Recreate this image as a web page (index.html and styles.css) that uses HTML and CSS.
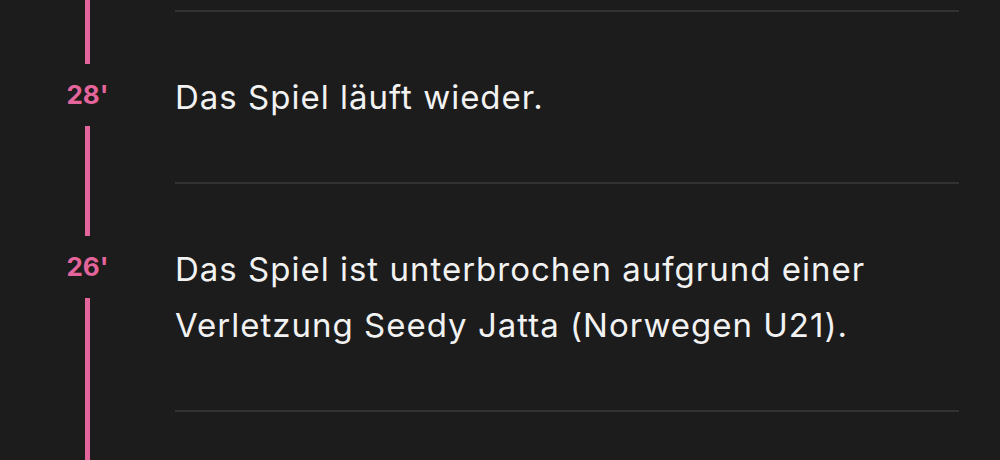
FILE: index.html
```html
<!DOCTYPE html>
<html lang="de">
<head>
  <meta charset="UTF-8">
  <meta name="viewport" content="width=device-width, initial-scale=1.0">
  <title>Liveticker</title>
  <link rel="stylesheet" href="styles.css">
</head>
<body>

  <div class="ticker">
    <!-- previous event, scrolled out of view -->
    <div class="event stub">
      <div class="timeline"><span class="line"></span></div>
      <div class="content"></div>
    </div>

    <div class="event">
      <div class="timeline">
        <span class="line top"></span>
        <span class="minute">28'</span>
        <span class="line"></span>
      </div>
      <div class="content">
        <p>Das Spiel läuft wieder.</p>
      </div>
    </div>

    <div class="event">
      <div class="timeline">
        <span class="line top"></span>
        <span class="minute">26'</span>
        <span class="line"></span>
      </div>
      <div class="content">
        <p>Das Spiel ist unterbrochen aufgrund einer Verletzung Seedy Jatta (Norwegen U21).</p>
      </div>
    </div>

    <div class="event">
      <div class="timeline"><span class="line"></span></div>
      <div class="content"></div>
    </div>
  </div>

</body>
</html>
```

FILE: styles.css
```css
* {
  margin: 0;
  padding: 0;
  box-sizing: border-box;
}

body {
  font-family: Inter, "Noto Sans", sans-serif;
  background-color: #1c1c1c;
  color: #f2f2f2;
  height: 100vh;
  overflow: hidden;
}

.ticker {
  display: flex;
  flex-direction: column;
}

.event {
  display: flex;
}

.timeline {
  width: 175px;
  flex-shrink: 0;
  display: flex;
  flex-direction: column;
  align-items: center;
}

.timeline .line {
  width: 5px;
  flex-grow: 1;
  background-color: #e4649c;
}

.timeline .line.top {
  flex-grow: 0;
  height: 52px;
}

.minute {
  height: 62px;
  line-height: 62px;
  font-size: 26px;
  font-weight: 700;
  color: #e4649c;
}

.content {
  flex-grow: 1;
  margin-right: 41px;
  padding: 57px 0;
  border-bottom: 2px solid #323232;
}

.content p {
  font-size: 33px;
  line-height: 56px;
  letter-spacing: 1px;
}

.stub .content {
  height: 12px;
  padding: 0;
}

.event:last-child .content {
  height: 49px;
  padding: 0;
  border-bottom: none;
}
```
